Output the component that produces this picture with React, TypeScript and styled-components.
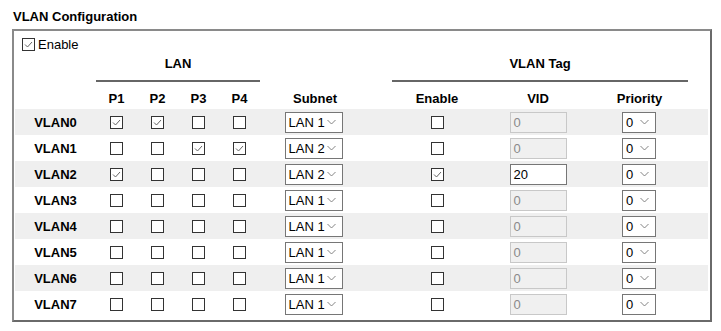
import React from "react";
import styled, { createGlobalStyle } from "styled-components";

const GlobalStyle = createGlobalStyle`
  body {
    margin: 0;
    background: #ffffff;
    font-family: "Liberation Sans", Arial, sans-serif;
    font-size: 13px;
    color: #000000;
  }
`;

const COLS = "81px 41px 41px 41px 41px 110px 22px 90px 112px 94px 1fr";

const Page = styled.div`
  width: 721px;
  height: 331px;
  padding: 9px 0 0 12px;
  box-sizing: border-box;
`;

const Title = styled.div`
  font-weight: bold;
  font-size: 13px;
  line-height: 16px;
  padding-left: 1px;
  margin-bottom: 4px;
`;

const Box = styled.div`
  width: 700px;
  box-sizing: border-box;
  border: 2px solid #7a7a7a;
  border-color: #8a8a8a #6a6a6a #6a6a6a #8a8a8a;
  padding: 0 2px 3px 1px;
`;

const EnableRow = styled.label`
  display: flex;
  align-items: center;
  gap: 3px;
  height: 26px;
  padding-left: 7px;
`;

const Grid = styled.div<{ $shade?: boolean; $height: number }>`
  display: grid;
  grid-template-columns: ${COLS};
  height: ${(p) => p.$height}px;
  align-items: center;
  background: ${(p) => (p.$shade ? "#efefef" : "transparent")};
`;

const GroupHead = styled.div<{ $from: number; $to: number }>`
  grid-column: ${(p) => p.$from} / ${(p) => p.$to};
  align-self: stretch;
  display: flex;
  align-items: flex-end;
  justify-content: center;
  font-weight: bold;
  line-height: 14px;
  padding-bottom: 9px;
  border-bottom: 2px solid #666666;
`;

const ColHead = styled.div<{ $shift?: number }>`
  align-self: end;
  text-align: center;
  font-weight: bold;
  line-height: 14px;
  padding-bottom: 3px;
  padding-right: ${(p) => p.$shift ?? 0}px;
`;

const Cell = styled.div<{ $shift?: number }>`
  display: flex;
  justify-content: center;
  align-items: center;
  padding-right: ${(p) => p.$shift ?? 0}px;
`;

const Label = styled(Cell)`
  font-weight: bold;
`;

const Check = styled.span`
  width: 13px;
  height: 13px;
  box-sizing: border-box;
  border: 1px solid #333333;
  background: #ffffff;
  display: inline-flex;
  align-items: center;
  justify-content: center;
`;

const Select = styled.div<{ $width: number }>`
  width: ${(p) => p.$width}px;
  height: 21px;
  box-sizing: border-box;
  border: 1px solid #767676;
  background: #ffffff;
  display: flex;
  align-items: center;
  justify-content: space-between;
  padding: 0 6px 0 3px;
  line-height: 19px;
`;

const TextBox = styled.div<{ $disabled?: boolean }>`
  width: 57px;
  height: 21px;
  box-sizing: border-box;
  border: 1px solid ${(p) => (p.$disabled ? "#c8c8c8" : "#767676")};
  background: ${(p) => (p.$disabled ? "#f0f0f0" : "#ffffff")};
  color: ${(p) => (p.$disabled ? "#8a8a8a" : "#000000")};
  padding-left: 3px;
  line-height: 19px;
`;

function CheckBox({ checked }: { checked?: boolean }) {
  return (
    <Check>
      {checked && (
        <svg width="11" height="11" viewBox="0 0 11 11">
          <polyline points="2,5.5 4.5,8 9,3" fill="none" stroke="#666" strokeWidth="1" />
        </svg>
      )}
    </Check>
  );
}

function Chevron() {
  return (
    <svg width="9" height="6" viewBox="0 0 9 6">
      <polyline points="0.5,1 4.5,5 8.5,1" fill="none" stroke="#777" strokeWidth="0.9" />
    </svg>
  );
}

type Vlan = {
  ports: boolean[];
  subnet: string;
  tag: boolean;
  vid: string;
};

const vlans: Vlan[] = [
  { ports: [true, true, false, false], subnet: "LAN 1", tag: false, vid: "0" },
  { ports: [false, false, true, true], subnet: "LAN 2", tag: false, vid: "0" },
  { ports: [true, false, false, false], subnet: "LAN 2", tag: true, vid: "20" },
  { ports: [false, false, false, false], subnet: "LAN 1", tag: false, vid: "0" },
  { ports: [false, false, false, false], subnet: "LAN 1", tag: false, vid: "0" },
  { ports: [false, false, false, false], subnet: "LAN 1", tag: false, vid: "0" },
  { ports: [false, false, false, false], subnet: "LAN 1", tag: false, vid: "0" },
  { ports: [false, false, false, false], subnet: "LAN 1", tag: false, vid: "0" },
];

export default function App() {
  return (
    <>
      <GlobalStyle />
      <Page>
        <Title>VLAN Configuration</Title>
        <Box>
          <EnableRow>
            <CheckBox checked />
            Enable
          </EnableRow>
          <Grid $height={24}>
            <GroupHead $from={2} $to={6}>LAN</GroupHead>
            <GroupHead $from={8} $to={11}>VLAN Tag</GroupHead>
          </Grid>
          <Grid $height={28}>
            <div />
            <ColHead>P1</ColHead>
            <ColHead>P2</ColHead>
            <ColHead>P3</ColHead>
            <ColHead>P4</ColHead>
            <ColHead>Subnet</ColHead>
            <div />
            <ColHead>Enable</ColHead>
            <ColHead>VID</ColHead>
            <ColHead $shift={3}>Priority</ColHead>
          </Grid>
          {vlans.map((v, i) => (
            <Grid key={i} $height={26} $shade={i % 2 === 0}>
              <Label>VLAN{i}</Label>
              {v.ports.map((p, j) => (
                <Cell key={j}>
                  <CheckBox checked={p} />
                </Cell>
              ))}
              <Cell $shift={3}>
                <Select $width={58}>
                  {v.subnet}
                  <Chevron />
                </Select>
              </Cell>
              <div />
              <Cell>
                <CheckBox checked={v.tag} />
              </Cell>
              <Cell>
                <TextBox $disabled={!v.tag}>{v.vid}</TextBox>
              </Cell>
              <Cell $shift={4}>
                <Select $width={34}>
                  0
                  <Chevron />
                </Select>
              </Cell>
            </Grid>
          ))}
        </Box>
      </Page>
    </>
  );
}
